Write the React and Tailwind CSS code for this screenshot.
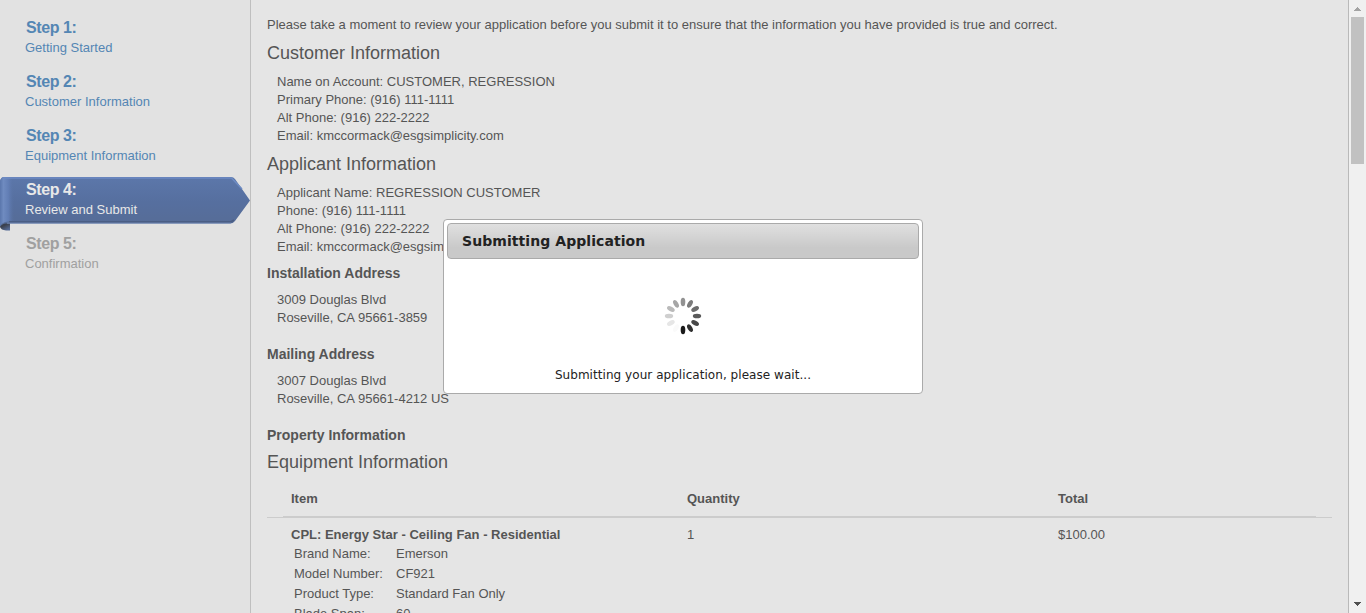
const steps = [
  ["Step 1:", "Getting Started", "text-[#5486b4]"],
  ["Step 2:", "Customer Information", "text-[#5486b4]"],
  ["Step 3:", "Equipment Information", "text-[#5486b4]"],
  ["Step 4:", "Review and Submit", "text-[#e8e8e8]"],
  ["Step 5:", "Confirmation", "text-[#a0a0a0]"],
];

const blades = ["#929292", "#7c7c7c", "#6c6c6c", "#5a5a5a", "#484848", "#303030", "#1a1a1a", "#fafafa", "#e6e6e6", "#cfcfcf", "#bababa", "#a6a6a6"];

function Ribbon() {
  return (
    <svg className="absolute left-0 top-0" width="250" height="54" viewBox="0 0 250 54">
      <defs>
        <linearGradient id="body" x1="0" y1="0" x2="0" y2="1">
          <stop offset="0" stopColor="#5c77aa" />
          <stop offset="0.5" stopColor="#566f9f" />
          <stop offset="1" stopColor="#566c96" />
        </linearGradient>
        <linearGradient id="fold" x1="0" y1="0" x2="1" y2="0">
          <stop offset="0" stopColor="#5a76ac" />
          <stop offset="0.25" stopColor="#6f8bc0" />
          <stop offset="0.6" stopColor="#627eb5" />
          <stop offset="1" stopColor="#5a74a6" stopOpacity="0" />
        </linearGradient>
        <linearGradient id="tail" x1="0" y1="0" x2="0.6" y2="1">
          <stop offset="0" stopColor="#30343e" />
          <stop offset="0.5" stopColor="#3c4250" />
          <stop offset="1" stopColor="#556a94" />
        </linearGradient>
      </defs>
      <path d="M0 45H10V53.500H6Q1 53 0 50Z" fill="url(#tail)" />
      <path d="M4 0H231Q233.500 0 235 2L250 23.500L235 44Q233 46.500 230 46.500H6Q2 46.500 0 50V4Q1 0 4 0Z" fill="url(#body)" />
      <path d="M4 0H14V44.500H8Q2 45 0 49V4Q1 0 4 0Z" fill="url(#fold)" />
      <path d="M3 1H231.500L242 12" fill="none" stroke="#6d8bc3" strokeWidth="1.500" />
      <path d="M9 44.700H231L234 43" fill="none" stroke="#4a5e84" strokeWidth="1.600" />
      <path d="M7 46.200H231" fill="none" stroke="#7890bd" strokeWidth="0.800" />
    </svg>
  );
}

function Sidebar() {
  return (
    <aside className="w-[251px] shrink-0 border-r border-[#bfbfbf] bg-[#e2e2e2] pt-[15px]">
      {steps.map(([title, label, color], i) => (
        <div key={title} className={`relative h-[54px] ${color}`}>
          {i === 3 && <Ribbon />}
          <div className="relative pl-[26px] pt-[2px] text-[16px] font-bold leading-[21px] tracking-[-0.4px]">{title}</div>
          <div className="relative pl-[25px] text-[13px] leading-[19px]">{label}</div>
        </div>
      ))}
    </aside>
  );
}

function Lines({ items, className = "mt-[9px]" }) {
  return (
    <div className={`pl-[10px] ${className}`}>
      {items.map((t) => <p key={t} className="h-[18px]">{t}</p>)}
    </div>
  );
}

const H = ({ children, className }) => <h2 className={`h-5 text-[18px] leading-5 ${className}`}>{children}</h2>;
const B = ({ children, className }) => <h3 className={`h-[18px] text-[14px] font-bold ${className}`}>{children}</h3>;

const details = [
  ["Brand Name:", "Emerson"],
  ["Model Number:", "CF921"],
  ["Product Type:", "Standard Fan Only"],
  ["Blade Span:", "60"],
];

function Review() {
  return (
    <main className="flex-1 overflow-hidden bg-[#e5e5e5] pl-4 pr-4 pt-4 text-[13px] leading-[18px] text-[#555]">
      <p className="h-[18px]">Please take a moment to review your application before you submit it to ensure that the information you have provided is true and correct.</p>
      <H className="mt-[9px]">Customer Information</H>
      <Lines className="mt-[10px]" items={["Name on Account: CUSTOMER, REGRESSION", "Primary Phone: (916) 111-1111", "Alt Phone: (916) 222-2222", "Email: kmccormack@esgsimplicity.com"]} />
      <H className="mt-[9px]">Applicant Information</H>
      <Lines className="mt-[10px]" items={["Applicant Name: REGRESSION CUSTOMER", "Phone: (916) 111-1111", "Alt Phone: (916) 222-2222", "Email: kmccormack@esgsimplicity.com"]} />
      <B className="mt-[8px]">Installation Address</B>
      <Lines items={["3009 Douglas Blvd", "Roseville, CA 95661-3859"]} />
      <B className="mt-[18px]">Mailing Address</B>
      <Lines items={["3007 Douglas Blvd", "Roseville, CA 95661-4212 US"]} />
      <B className="mt-[18px]">Property Information</B>
      <H className="mt-[8px]">Equipment Information</H>
      <div className="mt-[18px] grid h-[26px] grid-cols-[396px_371px_1fr] pl-6 font-bold">
        <span>Item</span><span>Quantity</span><span>Total</span>
      </div>
      <div className="mx-4 h-px bg-[#cccccc]" />
      <div className="h-px bg-[#cccccc]" />
      <div className="mt-[8px] grid h-[18px] grid-cols-[396px_371px_1fr] pl-6">
        <span className="font-bold">CPL: Energy Star - Ceiling Fan - Residential</span><span>1</span><span>$100.00</span>
      </div>
      {details.map(([k, v]) => (
        <div key={k} className="grid h-5 grid-cols-[102px_1fr] pl-[27px] leading-5">
          <span>{k}</span><span>{v}</span>
        </div>
      ))}
    </main>
  );
}

function Scrollbar() {
  return (
    <div className="flex w-[18px] shrink-0 flex-col items-center border-l border-[#b9b9b9] bg-[#f0f0f0]">
      <svg width="17" height="17" shapeRendering="crispEdges"><path d="M8 7h1v1h1v1h1v1h1v1h-7v-1h1v-1h1v-1h1z" fill="#a3a3a3" /></svg>
      <div className="h-[147px] w-[13px] bg-[#c1c1c1]" />
      <div className="flex-1" />
      <svg width="17" height="17" shapeRendering="crispEdges"><path d="M5 6h7v1h-1v1h-1v1h-1v1h-1v-1h-1v-1h-1v-1h-1z" fill="#505050" /></svg>
    </div>
  );
}

function Dialog() {
  return (
    <div className="absolute left-[443px] top-[219px] flex h-[175px] w-[480px] flex-col rounded-[4px] border border-[#aaa] bg-white p-[3px] font-['DejaVu_Sans',sans-serif] text-[#222]">
      <div className="h-9 shrink-0 rounded-[4px] border border-[#aaa] bg-linear-to-b from-[#e0e0e0] to-[#c9c9c9] to-70% pl-[14px] text-[14px] font-bold leading-[34px] tracking-[0.07px]">Submitting Application</div>
      <div className="flex flex-1 flex-col items-center">
        <svg className="mt-[37px] shrink-0" width="40" height="40" viewBox="-20 -20 40 40">
          {blades.map((c, i) => <ellipse key={c} cx="0" cy="-14" rx="2.300" ry="4.200" fill={c} transform={`rotate(${i * 30})`} />)}
        </svg>
        <p className="mt-[30px] text-[12px] leading-[18px] tracking-[0.05px]">Submitting your application, please wait...</p>
      </div>
    </div>
  );
}

export default function App() {
  return (
    <div className="relative flex h-[613px] w-[1366px] overflow-hidden font-['Liberation_Sans',Arial,sans-serif]">
      <Sidebar />
      <Review />
      <Scrollbar />
      <Dialog />
    </div>
  );
}
